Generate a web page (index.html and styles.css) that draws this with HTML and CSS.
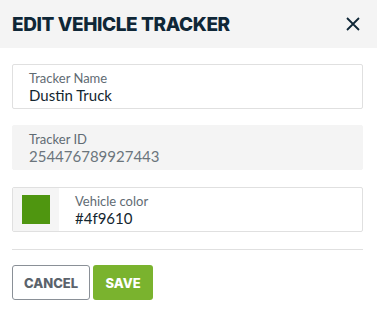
FILE: index.html
```html
<!DOCTYPE html>
<html lang="en">
<head>
  <meta charset="UTF-8">
  <meta name="viewport" content="width=device-width, initial-scale=1.0">
  <title>Edit Vehicle Tracker</title>
  <link rel="stylesheet" href="styles.css">
</head>
<body>

<div class="modal">
  <div class="modal-header">
    <h2>EDIT VEHICLE TRACKER</h2>
    <button class="close-btn" aria-label="Close">
      <svg width="14" height="14" viewBox="0 0 14 14">
        <path d="M1 1 L13 13 M13 1 L1 13" stroke="#0f2737" stroke-width="1.8" fill="none"/>
      </svg>
    </button>
  </div>

  <div class="modal-body">
    <div class="field">
      <label for="trackerName">Tracker Name</label>
      <input type="text" id="trackerName" value="Dustin Truck">
    </div>

    <div class="field disabled">
      <label for="trackerId">Tracker ID</label>
      <input type="text" id="trackerId" value="254476789927443" disabled>
    </div>

    <div class="field color-field">
      <div class="swatch-box">
        <span class="swatch"></span>
      </div>
      <div class="color-text">
        <label for="vehicleColor">Vehicle color</label>
        <input type="text" id="vehicleColor" value="#4f9610">
      </div>
    </div>

    <div class="divider"></div>

    <div class="actions">
      <button class="btn btn-cancel">CANCEL</button>
      <button class="btn btn-save">SAVE</button>
    </div>
  </div>
</div>

</body>
</html>
```

FILE: styles.css
```css
body {
  margin: 0;
  font-family: Lato, "Open Sans", sans-serif;
  background: #ffffff;
}
.modal {
  width: 377px;
}
.modal-header {
  display: flex;
  align-items: center;
  justify-content: space-between;
  height: 48px;
  padding: 0 12px;
  background: #f4f4f4;
}
.modal-header h2 {
  margin: 0;
  font-family: Inter, sans-serif;
  font-weight: 800;
  font-size: 19px;
  letter-spacing: -0.4px;
  color: #0f2737;
}
.close-btn {
  border: none;
  background: none;
  padding: 0;
  margin-right: 5px;
  display: flex;
  cursor: pointer;
}
.modal-body {
  padding: 16px 14px 0 12px;
}
.field {
  display: flex;
  flex-direction: column;
  height: 45px;
  box-sizing: border-box;
  padding: 5px 16px 0;
  border: 1px solid #e0e0e0;
  border-radius: 2px;
  margin-bottom: 16px;
}
.field label {
  font-size: 13px;
  color: #5f6b73;
  line-height: 16px;
}
.field input {
  border: none;
  outline: none;
  padding: 0;
  margin-top: 0;
  background: transparent;
  font-family: Lato, sans-serif;
  font-size: 15px;
  line-height: 18px;
  color: #13262f;
}
.field.disabled {
  background: #f4f4f4;
  border-color: #f4f4f4;
}
.field.disabled input {
  color: #6b757c;
}
.color-field {
  flex-direction: row;
  padding: 0;
  margin-top: 17px;
  margin-bottom: 17px;
}
.swatch-box {
  width: 46px;
  background: #f5f5f5;
  display: flex;
  align-items: center;
  justify-content: center;
}
.swatch {
  width: 28px;
  height: 29px;
  background: #4f9610;
}
.color-text {
  display: flex;
  flex-direction: column;
  padding: 5px 16px 0;
}
.divider {
  height: 1px;
  background: #e0e0e0;
  margin-bottom: 15px;
}
.actions {
  display: flex;
  gap: 3px;
}
.btn {
  height: 35px;
  border-radius: 3px;
  font-family: Inter, sans-serif;
  font-weight: 800;
  font-size: 13px;
  cursor: pointer;
}
.btn-cancel {
  width: 78px;
  background: #ffffff;
  border: 1.5px solid #8a9097;
  color: #5b636b;
}
.btn-save {
  width: 60px;
  background: #7ab32e;
  border: none;
  color: #ffffff;
}
```
